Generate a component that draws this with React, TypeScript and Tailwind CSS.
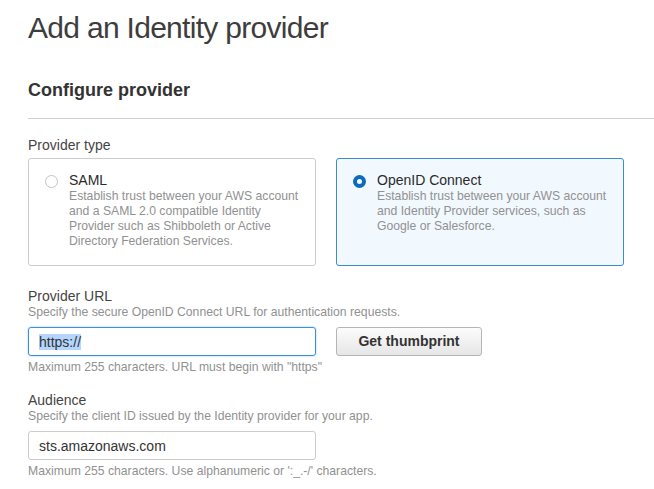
const providerTypes = [
  {
    id: 'saml',
    title: 'SAML',
    lines: [
      'Establish trust between your AWS account',
      'and a SAML 2.0 compatible Identity',
      'Provider such as Shibboleth or Active',
      'Directory Federation Services.',
    ],
  },
  {
    id: 'oidc',
    title: 'OpenID Connect',
    lines: [
      'Establish trust between your AWS account',
      'and Identity Provider services, such as',
      'Google or Salesforce.',
    ],
  },
];

function ProviderCard({ title, lines, selected }: { title: string; lines: string[]; selected: boolean }) {
  return (
    <div
      className={`w-[288px] h-[108px] rounded-[3px] border pl-[16px] pt-[12px] ${
        selected ? 'border-[#3a8ad6] bg-[#f1f8fe]' : 'border-[#cccccc] bg-white'
      }`}
    >
      <div className="flex items-start gap-[11px]">
        <span
          className={`mt-[4px] w-[13px] h-[13px] shrink-0 rounded-full ${
            selected ? 'border-[4px] border-[#0b6cbf] bg-white' : 'border border-[#c4c4c4] bg-white'
          }`}
        />
        <div>
          <div className="text-[14px] leading-[18px] text-[#2b2b2b]">{title}</div>
          <div className="text-[12.2px] leading-[15px] text-[#919191]">
            {lines.map((l) => (
              <div key={l} className="whitespace-nowrap">{l}</div>
            ))}
          </div>
        </div>
      </div>
    </div>
  );
}

export default function App() {
  return (
    <div
      className="w-[654px] h-[489px] overflow-hidden bg-white pl-[28px]"
      style={{ fontFamily: '"Liberation Sans", Arial, sans-serif' }}
    >
      <h1 className="mt-[10px] text-[30px] leading-[36px] tracking-[-0.7px] text-[#3d3d3d] font-normal">
        Add an Identity provider
      </h1>

      <h2 className="mt-[33px] text-[18px] leading-[22px] font-bold text-[#333333]">Configure provider</h2>
      <div className="mt-[17px] h-px bg-[#cfcfcf]" />

      <div className="mt-[17px] text-[14px] leading-[18px] text-[#444444]">Provider type</div>
      <div className="mt-[4px] flex gap-[20px]">
        {providerTypes.map((p) => (
          <ProviderCard key={p.id} title={p.title} lines={p.lines} selected={p.id === 'oidc'} />
        ))}
      </div>

      {/* Provider URL */}
      <div className="mt-[21px] text-[14px] leading-[18px] text-[#444444]">Provider URL</div>
      <div className="text-[12.2px] leading-[15px] text-[#919191]">
        Specify the secure OpenID Connect URL for authentication requests.
      </div>
      <div className="mt-[7px] flex items-center gap-[20px]">
        <div className="w-[288px] h-[29px] rounded-[3px] border border-[#3d8fdc] shadow-[0_0_2px_rgba(61,143,220,0.6)] flex items-center px-[10px]">
          <span className="text-[14px] leading-[16px] text-[#333333] bg-[#b4d5fe]">https://</span>
        </div>
        <button className="w-[146px] h-[29px] rounded-[3px] border border-[#b5b5b5] bg-gradient-to-b from-[#fcfcfc] to-[#e6e6e6] text-[14px] font-bold text-[#333333]">
          Get thumbprint
        </button>
      </div>
      <div className="mt-[4px] text-[12.2px] leading-[15px] text-[#919191]">
        Maximum 255 characters. URL must begin with "https"
      </div>

      {/* Audience */}
      <div className="mt-[16px] text-[14px] leading-[18px] text-[#444444]">Audience</div>
      <div className="text-[12.2px] leading-[15px] text-[#919191]">
        Specify the client ID issued by the Identity provider for your app.
      </div>
      <div className="mt-[7px] w-[288px] h-[29px] rounded-[3px] border border-[#cccccc] flex items-center px-[10px]">
        <span className="text-[14px] leading-[16px] text-[#333333]">sts.amazonaws.com</span>
      </div>
      <div className="mt-[4px] text-[12.2px] leading-[15px] text-[#919191]">
        Maximum 255 characters. Use alphanumeric or ':_.-/' characters.
      </div>
    </div>
  );
}
